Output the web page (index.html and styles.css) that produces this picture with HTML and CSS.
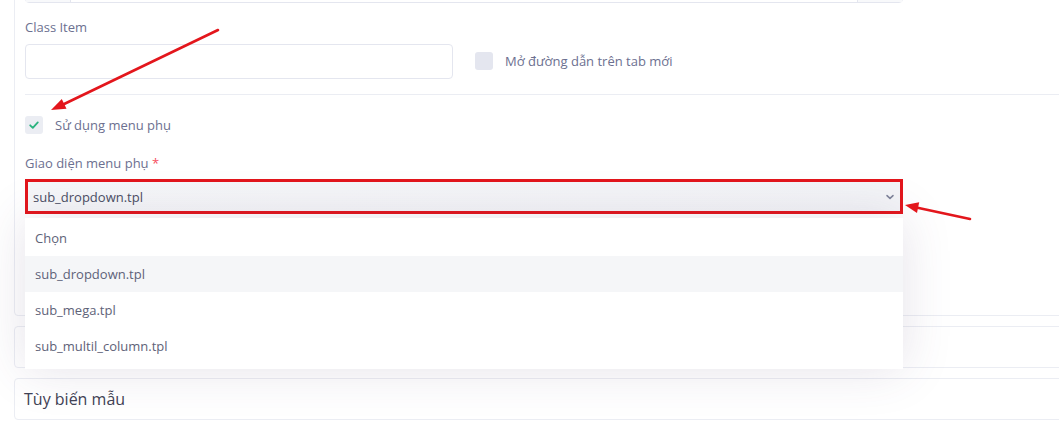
FILE: index.html
```html
<!DOCTYPE html>
<html lang="vi">
<head>
  <meta charset="UTF-8" />
  <title>Menu item</title>
  <link rel="stylesheet" href="styles.css">
</head>
<body>

<div class="card card-main">
  <div class="input-group">
    <span class="addon"></span>
    <span class="ig-field"></span>
    <span class="addon addon-right"></span>
  </div>

  <div class="row">
    <div class="col">
      <label class="form-label">Class Item</label>
      <input type="text" class="form-control" />
    </div>
    <div class="col col-check">
      <label class="check">
        <span class="check-box"></span>
        <span>Mở đường dẫn trên tab mới</span>
      </label>
    </div>
  </div>

  <hr class="divider">

  <label class="check check-sub">
    <span class="check-box checked">
      <svg width="12" height="12" viewBox="0 0 12 12"><path d="M2.2 6.3 L4.8 8.8 L9.8 3.4" fill="none" stroke="#2bb37f" stroke-width="1.8" stroke-linecap="round" stroke-linejoin="round"/></svg>
    </span>
    <span>Sử dụng menu phụ</span>
  </label>

  <label class="form-label label-sub">Giao diện menu phụ <span class="req">*</span></label>
  <div class="select-wrap">
    <div class="select">
      <span>sub_dropdown.tpl</span>
      <svg width="10" height="10" viewBox="0 0 10 10"><path d="M2 3.6 L5 6.4 L8 3.6" fill="none" stroke="#7e8299" stroke-width="1.5" stroke-linecap="round" stroke-linejoin="round"/></svg>
    </div>
    <ul class="dropdown">
      <li>Chọn</li>
      <li class="active">sub_dropdown.tpl</li>
      <li>sub_mega.tpl</li>
      <li>sub_multil_column.tpl</li>
    </ul>
  </div>
</div>

<div class="card card-small">
  <span class="card-toggle"></span>
</div>

<div class="card card-small">
  <div class="card-title">Tùy biến mẫu</div>
</div>

<!-- mui ten chu thich -->
<svg class="notes" width="1059" height="430" viewBox="0 0 1059 430">
  <line x1="218" y1="30" x2="60" y2="106" stroke="#e3161c" stroke-width="2.6" stroke-linecap="round"/>
  <polygon points="51,110 66.5,108.8 61.8,99" fill="#e3161c"/>
  <line x1="970" y1="219" x2="914" y2="207" stroke="#e3161c" stroke-width="2.6" stroke-linecap="round"/>
  <polygon points="905,205 919.2,202.3 917,213" fill="#e3161c"/>
</svg>

</body>
</html>
```

FILE: styles.css
```css
body {
  margin: 0;
  background: #fff;
  font-family: 'Open Sans', 'Noto Sans', sans-serif;
  font-size: 13px;
  color: #3f4254;
  overflow: hidden;
  position: relative;
  height: 430px;
}
.card {
  margin-left: 14px;
  margin-right: -20px;
  border: 1px solid #ebedf3;
  border-radius: 4px;
  background: #fff;
}
.card-main {
  margin-top: -40px;
  padding: 0 10px 101px 10px;
}
.card-small {
  margin-top: 10px;
  height: 40px;
  display: flex;
  align-items: center;
  padding: 0 10px;
}
.card-title {
  font-size: 16px;
  font-weight: 500;
  color: #3f4254;
  margin-left: -1px;
}
.card-toggle {
  width: 4px;
  height: 1px;
  margin-left: 0;
  margin-top: 1px;
  background: #7e8299;
}

.input-group {
  margin-top: 4px;
  width: 878px;
  height: 38px;
  box-sizing: border-box;
  border: 1px solid #e4e6ef;
  border-radius: 4px;
  display: flex;
}
.addon {
  width: 44px;
  background: #f8f9fb;
  border-right: 1px solid #e4e6ef;
}
.ig-field { flex: 1; }
.addon-right {
  border-right: none;
  border-left: 1px solid #e4e6ef;
}

.row {
  display: flex;
  gap: 22px;
  width: 878px;
}
.col { width: 428px; }
.form-label {
  display: block;
  color: #6c7090;
  line-height: 18px;
  margin-top: 15px;
  margin-bottom: 8px;
}
.form-control {
  display: block;
  box-sizing: border-box;
  width: 428px;
  height: 35px;
  margin: 0;
  border: 1px solid #e4e6ef;
  border-radius: 4px;
  background: #fff;
}
.col-check {
  padding-top: 49px;
}
.check {
  display: flex;
  align-items: center;
  gap: 12px;
  color: #6c7090;
  line-height: 18px;
}
.check-box {
  width: 18px;
  height: 18px;
  border-radius: 3px;
  background: #e4e6ef;
  display: flex;
  align-items: center;
  justify-content: center;
}
.check-box.checked {
  background: #ebedf3;
}
.divider {
  border: none;
  border-top: 1px solid #ebedf3;
  margin: 15px -30px 0 0;
}
.check-sub {
  margin-top: 21px;
}
.label-sub {
  margin-top: 20px;
  margin-bottom: 7px;
}
.req { color: #f64e60; }

.select-wrap {
  position: relative;
  width: 878px;
}
.select {
  box-sizing: border-box;
  height: 35px;
  border: 3px solid #e3161c;
  background: linear-gradient(90deg, #f6f7f9, #f3f4f7);
  display: flex;
  align-items: center;
  justify-content: space-between;
  padding: 0 5px 0 5px;
  color: #4a4e63;
}
.dropdown {
  position: absolute;
  top: calc(100% + 4px);
  left: 0;
  right: 0;
  margin: 0;
  padding: 2px 0 5px;
  list-style: none;
  background: #fff;
  box-shadow: 0 0 50px 0 rgba(82, 63, 105, 0.15);
  z-index: 2;
}
.dropdown li {
  height: 36px;
  line-height: 36px;
  padding-left: 10px;
  color: #5e6278;
}
.dropdown li.active {
  background: #f5f6f8;
}

.notes {
  position: absolute;
  left: 0;
  top: 0;
  pointer-events: none;
  z-index: 5;
}
```
